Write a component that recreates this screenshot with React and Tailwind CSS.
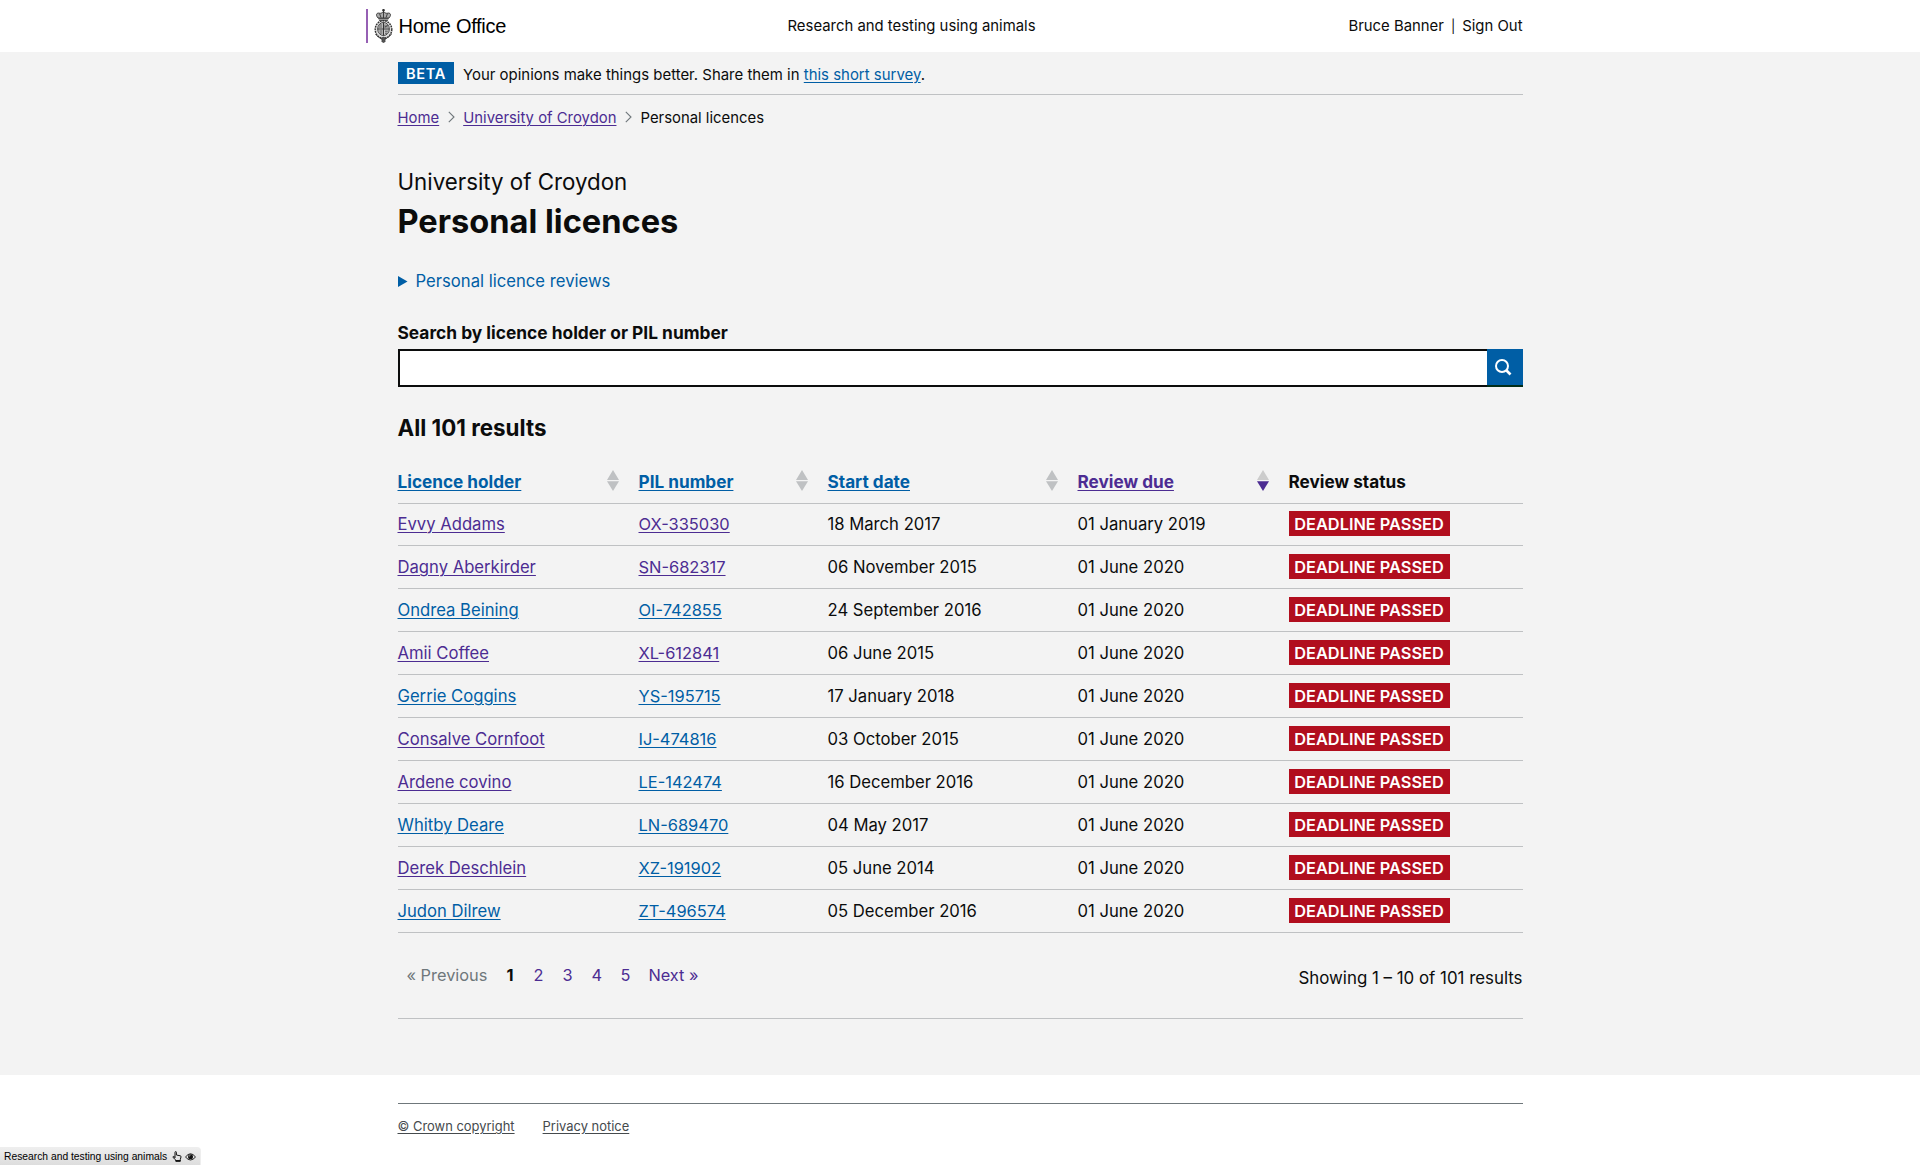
const BLUE = "text-[#005ea5]";
const VISITED = "text-[#4c2c92]";

// [holder, holder visited, PIL number, PIL visited, start date, review due]
const rows = [
  ["Evvy Addams", true, "OX-335030", true, "18 March 2017", "01 January 2019"],
  ["Dagny Aberkirder", true, "SN-682317", true, "06 November 2015", "01 June 2020"],
  ["Ondrea Beining", false, "OI-742855", false, "24 September 2016", "01 June 2020"],
  ["Amii Coffee", true, "XL-612841", true, "06 June 2015", "01 June 2020"],
  ["Gerrie Coggins", false, "YS-195715", false, "17 January 2018", "01 June 2020"],
  ["Consalve Cornfoot", true, "IJ-474816", false, "03 October 2015", "01 June 2020"],
  ["Ardene covino", true, "LE-142474", false, "16 December 2016", "01 June 2020"],
  ["Whitby Deare", false, "LN-689470", false, "04 May 2017", "01 June 2020"],
  ["Derek Deschlein", true, "XZ-191902", false, "05 June 2014", "01 June 2020"],
  ["Judon Dilrew", false, "ZT-496574", false, "05 December 2016", "01 June 2020"],
];

const columns = [
  { label: "Licence holder", sort: "none" },
  { label: "PIL number", sort: "none" },
  { label: "Start date", sort: "none" },
  { label: "Review due", sort: "desc" },
];

const GRID = "grid grid-cols-[241px_189px_250px_211px_1fr]";

function Link({ visited, className = "", children }) {
  return (
    <a
      href="#"
      className={`underline decoration-1 underline-offset-2 ${visited ? VISITED : BLUE} ${className}`}
    >
      {children}
    </a>
  );
}

function Crest() {
  return (
    <svg width="19" height="34" viewBox="0 0 19 34" fill="none" stroke="#333" strokeWidth="0.9">
      <path d="M9.500 0v3M8 1.200h3" strokeWidth="1.200" />
      <path d="M4 9C1 5.500 3 3.500 5.500 4.200C7.500 4.800 8.500 3 9.500 3s2 1.800 4 1.200C16 3.500 18 5.500 15 9z" fill="#aaa" />
      <path d="M9.500 3v6M5.500 4.500l1.500 4M13.500 4.500l-1.500 4" />
      <path d="M4.300 9.700h10.400M5 11.300h9" strokeWidth="1.100" />
      <ellipse cx="9.500" cy="20.500" rx="8.300" ry="8.800" fill="#ddd" strokeWidth="1.400" strokeDasharray="1.800 0.800" />
      <ellipse cx="9.500" cy="20" rx="5.800" ry="6.500" fill="#ccc" />
      <path d="M9.500 13.500v13M3.700 20h11.600" strokeWidth="1" />
      <path d="M5.500 16h2.800M5 18h3.300M11 15.500v3.500M13 15.800v3M11 18l2.500-1.500M5.500 22h3M6 24h2.500M11 22.200h2.800M11 24.200h2" strokeWidth="0.800" />
      <path d="M1.500 25c1.500 2.500 4 3.500 5.500 4.500M17.500 25c-1.500 2.500-4 3.500-5.500 4.500" />
      <path d="M7 29.500l2.500-1.200 2.500 1.200-1.200 1.500 .4 1.500-1.700 1-1.700-1 .4-1.500z" fill="#555" strokeWidth="0.800" />
    </svg>
  );
}

function Chevron() {
  return (
    <svg width="7" height="12" viewBox="0 0 7 12" fill="none" stroke="#6f777b" strokeWidth="1.100">
      <path d="M0.800 0.800L6 6L0.800 11.200" />
    </svg>
  );
}

function SortIcon({ direction }) {
  return (
    <svg width="12" height="21" viewBox="0 0 12 21" fill="#bfc1c3">
      <path d="M6 0L12 10H0z" fill={direction === "desc" ? "#cccccc" : "#bfc1c3"} />
      <path d="M0 11.200H12L6 21z" fill={direction === "desc" ? "#4c2c92" : "#bfc1c3"} />
    </svg>
  );
}

function HandIcon() {
  return (
    <svg width="10" height="11" viewBox="0 0 10 11" fill="none" stroke="#111" strokeWidth="1" strokeLinejoin="round">
      <path d="M3 7V1.300Q3 .6 3.700 .6T4.400 1.300V4L8.300 4.800Q9.200 5 9 6L8.300 8.500V10.300H3.800V9L1 6.400Q.6 5.700 1.300 5.500T3 6.500" />
      <path d="M3.800 9.700h4.500" strokeWidth="1.400" />
    </svg>
  );
}

function EyeIcon() {
  return (
    <svg width="11" height="8" viewBox="0 0 11 8" fill="none" stroke="#111">
      <path d="M.5 4Q5.500-2.500 10.500 4Q5.500 10 .5 4z" strokeWidth="0.900" />
      <circle cx="5.500" cy="3.700" r="2.500" fill="#111" stroke="none" />
      <path d="M4.200 3.500Q4.300 2.400 5.400 2.300" stroke="#fff" strokeWidth="0.600" />
    </svg>
  );
}

function Header() {
  return (
    <header className="h-[52px] bg-white">
      <div className="mx-auto grid h-full w-[1125px] grid-cols-3 text-[14.88px] leading-5">
        <div className="-ml-8 flex pt-[9px]">
          <div className="h-[34px] w-0.5 bg-[#9660b4]" />
          <div className="ml-[6px]">
            <Crest />
          </div>
          <span className="ml-[6px] mt-[5px] font-['Liberation_Sans',sans-serif] text-[20px] leading-6 tracking-[-0.3px] text-black">
            Home Office
          </span>
        </div>
        <div className="pl-[15px] pt-4">Research and testing using animals</div>
        <div className="flex justify-end gap-[7px] pt-4">
          <span>Bruce Banner</span>
          <span className="text-[13px]">|</span>
          <span>Sign Out</span>
        </div>
      </div>
    </header>
  );
}

function ResultsTable() {
  return (
    <div>
      <div className={`${GRID} h-9 border-b border-[#bfc1c3] text-[17.2px] font-bold leading-6`}>
        {columns.map((c) => (
          <div key={c.label} className="flex justify-between pr-5 pt-[2px]">
            <Link visited={c.sort === "desc"}>{c.label}</Link>
            <SortIcon direction={c.sort} />
          </div>
        ))}
        <div className="pt-[2px]">Review status</div>
      </div>
      {rows.map(([name, nv, pil, pv, start, due], i) => (
        <div
          key={name}
          className={`${GRID} items-start border-b border-[#bfc1c3] text-[16.65px] leading-[26px] ${i === 0 ? "h-[42px] pt-[7px]" : "h-[43px] pt-2"}`}
        >
          <Link visited={nv}>{name}</Link>
          <Link visited={pv} className="text-[16.45px]">{pil}</Link>
          <span>{start}</span>
          <span>{due}</span>
          <span className="h-[25px] w-[161px] bg-[#b10e1e] text-center text-[16.35px] font-semibold text-white">
            DEADLINE PASSED
          </span>
        </div>
      ))}
    </div>
  );
}

export default function App() {
  return (
    <div className="relative flex h-[1165px] flex-col overflow-hidden bg-white font-['Inter',sans-serif] text-[#0b0c0c]">
      <Header />
      <main className="h-[1023px] bg-[#f3f3f3]">
        <div className="mx-auto w-[1125px]">
          <div className="flex h-[43px] gap-[9.5px] border-b border-[#bfc1c3] pt-[10px] text-[14.95px]">
            <strong className="h-[22px] w-14 bg-[#005ea5] pl-[1px] text-center text-[14.6px] font-semibold leading-[24px] tracking-[0.6px] text-white">
              BETA
            </strong>
            <span className="mt-[3px] leading-5">
              Your opinions make things better. Share them in <Link>this short survey</Link>.
            </span>
          </div>
          <nav className="mt-[13px] flex h-5 items-center text-[14.88px] leading-5">
            <Link visited>Home</Link>
            <span className="ml-[9px] mr-[8px] mb-[2px]"><Chevron /></span>
            <Link visited>University of Croydon</Link>
            <span className="ml-[9px] mr-[8px] mb-[2px]"><Chevron /></span>
            <span>Personal licences</span>
          </nav>
          <div className="mt-[39px] text-[22.3px] leading-[30px]">University of Croydon</div>
          <h1 className="mt-[4px] text-[32.6px] font-bold leading-10">Personal licences</h1>
          <div className={`mt-[28px] flex items-center text-[16.67px] leading-6 ${BLUE}`}>
            <svg width="10" height="11" viewBox="0 0 10 11" fill="#005ea5">
              <path d="M0 0L9.500 5.500L0 11z" />
            </svg>
            <span className="ml-2">Personal licence reviews</span>
          </div>
          <label className="mt-[28px] block text-[17.35px] font-bold leading-6">
            Search by licence holder or PIL number
          </label>
          <div className="mt-[4px] flex h-[38px]">
            <div className="flex-1 border-2 border-r-0 border-[#0b0c0c] bg-white" />
            <button className="flex h-[38px] w-9 justify-center border-b-2 border-[#002d18] bg-[#005ea5] pt-[9px]">
              <svg width="18" height="18" viewBox="0 0 18 18" fill="none" stroke="white" className="mr-[3px]">
                <circle cx="8" cy="8" r="6" strokeWidth="2" />
                <path d="M12 12L16.500 16.500" strokeWidth="2.600" />
              </svg>
            </button>
          </div>
          <h2 className="mt-[26px] text-[22.35px] font-bold leading-[30px]">All 101 results</h2>
          <div className="mt-[25px]">
            <ResultsTable />
          </div>
          <div className="flex h-[86px] justify-between border-b border-[#bfc1c3] text-[16.35px] leading-6">
            <div className={`flex pl-[9px] pt-[30px] ${VISITED}`}>
              <span className="text-[#6f777b]">« Previous</span>
              <span className="ml-[19px] w-[27px] font-bold text-[#0b0c0c]">1</span>
              <span className="w-[29px]">2</span>
              <span className="w-[29px]">3</span>
              <span className="w-[29px]">4</span>
              <span className="w-[28px]">5</span>
              <span>Next »</span>
            </div>
            <div className="pt-[33px] text-[16.87px]">Showing 1 – 10 of 101 results</div>
          </div>
        </div>
      </main>
      <footer className="mx-auto w-[1125px] pt-7">
        <div className="flex gap-7 border-t border-[#6f777b] pt-[12px] text-[12.95px] leading-5 text-[#454a4d]">
          <a href="#" className="underline underline-offset-2">© Crown copyright</a>
          <a href="#" className="underline underline-offset-2">Privacy notice</a>
        </div>
      </footer>
      <div className="absolute bottom-0 left-0 flex h-[18px] w-[201px] items-center rounded-tr border-r border-t border-[#eeeeee] bg-linear-to-b from-[#eeeeee] to-[#dddddd] pl-1 font-['Liberation_Sans',sans-serif] text-[10.3px] leading-4 text-black">
        <span className="whitespace-nowrap">Research and testing using animals</span>
        <span className="ml-[5px]"><HandIcon /></span>
        <span className="ml-[3px]"><EyeIcon /></span>
      </div>
    </div>
  );
}
